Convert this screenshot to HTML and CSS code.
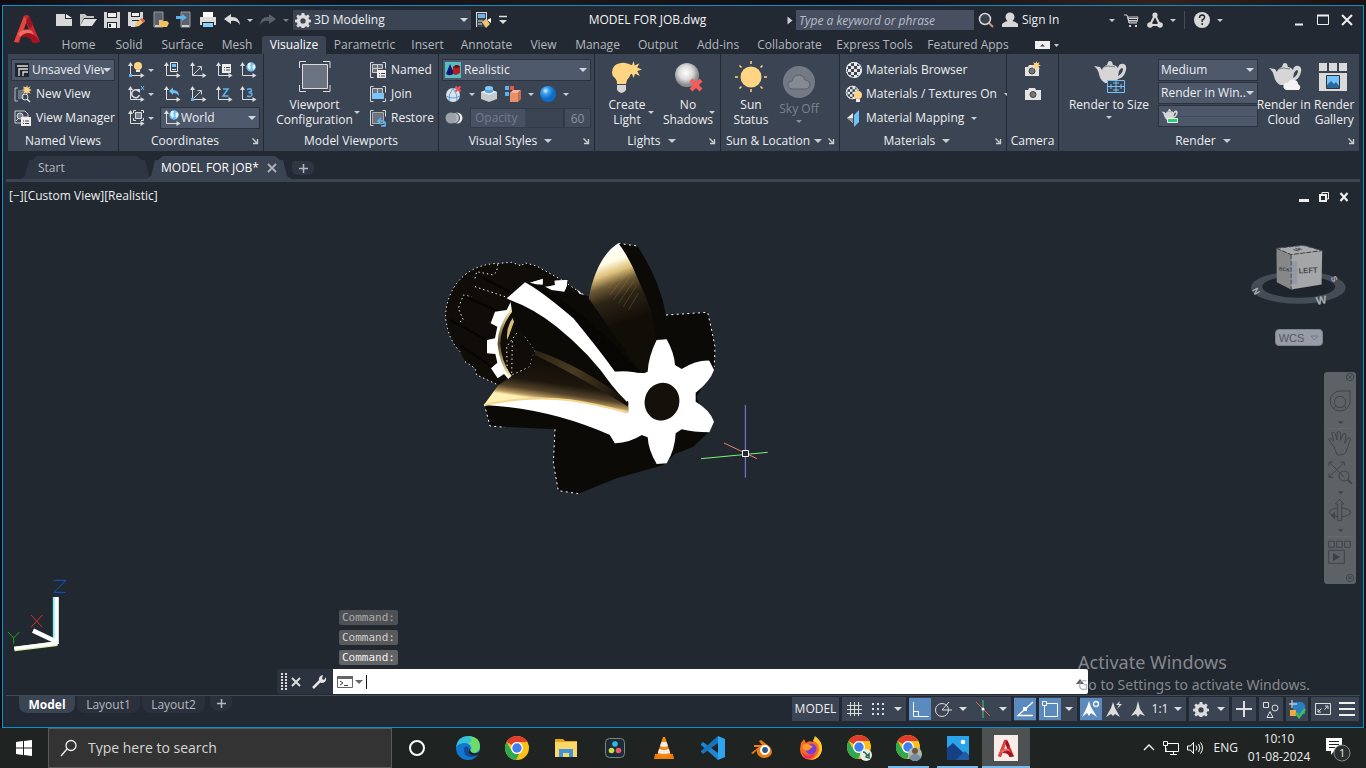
FILE: index.html
```html
<!DOCTYPE html>
<html lang="en">
<head>
<meta charset="utf-8">
<title>MODEL FOR JOB.dwg</title>
<link rel="stylesheet" href="styles.css">
</head>
<body>
<svg class="defs" aria-hidden="true">
  <defs>
    <symbol id="axes" viewBox="0 0 18 18"><path d="M3.500 3v11.500H15" fill="none" stroke="#dcdcdc"/><path d="M1 5L3.500 1 6 5zM13.500 12l4 2.500-4 2.500z" fill="#dcdcdc"/></symbol>
    <symbol id="globe" viewBox="0 0 10 10"><circle cx="5" cy="5" r="4.700" fill="#6fc1f5"/><path d="M2 1.500Q4 0 5 1.500L4 3.500 5 6 3.500 8 1.500 5zM6.500 3l2.500-.5.500 3L7.500 8 6.500 6z" fill="#e6f3fb"/></symbol>
    <symbol id="checker" viewBox="0 0 18 18"><circle cx="9" cy="9" r="8" fill="#e8e8e8"/><path d="M6 2h3v3H6zM12 2h2l1 3h-3zM3 5h3v3H3zM9 5h3v3H9zM15 5h1l1 3h-2zM6 8h3v3H6zM12 8h3v3h-3zM1 8h2v3H1zM3 11h3v3H3zM9 11h3v3H9zM6 14h3v3H6zM12 14h3l-3 2z" fill="#3b4453"/><circle cx="9" cy="9" r="7.500" fill="none" stroke="#e8e8e8"/></symbol>
    <symbol id="teapot" viewBox="0 0 34 24"><path d="M1 6l6 1 2 3q1-4 5-5l1-3q2-2 4 0l1 3q3 0 5 3 1-5 6-4 4 2 1 9-2 5-7 6-2 3-4 4H12q-5-3-6-9Q5 9 1 6zm25 5l-1 5q5-3 5-7-1-3-4 2z" fill="#d6d6d6" fill-rule="evenodd"/><path d="M10 7q5-2 12 0" stroke="#3b4453" stroke-width=".6" fill="none"/></symbol>
    <symbol id="gear" viewBox="0 0 16 16"><path d="M6.700 1h2.600l.4 2 1.500.7 1.800-1.200 1.700 1.700-1.200 1.800.6 1.400 1.900.4v2.400l-1.900.4-.6 1.400 1.200 1.800-1.700 1.700-1.800-1.200-1.500.7-.4 2H6.700l-.4-2-1.500-.7L3 15.500l-1.700-1.700L2.500 12l-.6-1.400L0 10.200V7.800l1.900-.4L2.500 6 1.300 4.200 3 2.500l1.800 1.200L6.300 3zM8 6.300A2.600 2.600 0 1 0 8 11.600 2.600 2.600 0 1 0 8 6.300z" fill="#dcdcdc" fill-rule="evenodd"/></symbol>
    <symbol id="burst" viewBox="0 0 16 16"><path d="M8 0l1.200 4.200L13.500 2l-2 4.200L16 8l-4.500 1.500L14 14l-4.500-2L8 16l-1.500-4L2 14l2-4.500L0 8l4.200-1.700L2 2l4.600 2z" fill="#ffd583"/></symbol>
    <symbol id="frame" viewBox="0 0 18 18"><path d="M4.500 1.500h-3v15h3M13.500 1.500h3v6M13.500 16.500h3v-3" fill="none" stroke="#d8d8d8"/></symbol>
    <symbol id="chrome" viewBox="0 0 24 24"><circle cx="12" cy="12" r="12" fill="#fbc116"/><path d="M12 0a12 12 0 0 1 10.400 6H12a6 6 0 0 0-5.200 3L1.600 6A12 12 0 0 1 12 0z" fill="#e33b2e"/><path d="M1.600 6l5.200 9a6 6 0 0 0 5.200 3h2l-3 6A12 12 0 0 1 1.600 6z" fill="#2da94f"/><circle cx="12" cy="12" r="6" fill="#fff"/><circle cx="12" cy="12" r="4.700" fill="#3f7ef0"/></symbol>
    <symbol id="autocad" viewBox="0 0 26 29"><path d="M0 28L10 2q2-2 5 0l11 26-7 1-3-7q-5-2-9 1l-2 6zM10 16h5l-3-8z" fill="#c9292f" fill-rule="evenodd"/><path d="M0 28L10 2l3 5-7 16-2 5z" fill="#e4453f"/><path d="M8 17q8-3 18 11l-7 1q-4-8-13-6z" fill="#a3131d"/><path d="M4 20q6-7 14-3l2 4q-7-5-14 2z" fill="#ef6b63"/><path d="M15 2l4 8-3 5-4-8z" fill="#981520"/></symbol>
    <symbol id="launcher" viewBox="0 0 8 8"><path d="M1.500 1.500l4 4M6.500 2v4.500H2" fill="none" stroke="#d0d0d0" stroke-width="1.300"/></symbol>
  </defs>
</svg>

<main class="window">
  <header class="top">
    <button class="logo" aria-label="Application menu"><svg width="26" height="29"><use href="#autocad"/></svg></button>
    <div class="title-row">
      <button class="tool" aria-label="New"><svg width="18" height="18" viewBox="0 0 18 18"><path d="M1 3h9v5h7v7H1z" fill="#d8d8d8"/><path d="M11 3l6 4h-6z" fill="#eee"/></svg></button>
      <button class="tool" aria-label="Open"><svg width="18" height="18" viewBox="0 0 18 18"><path d="M1 15V3h5l2 2h7v2H5z" fill="#c4c4c4"/><path d="M5 8h13l-5 7H1z" fill="#dedede"/></svg></button>
      <button class="tool" aria-label="Save"><svg width="18" height="18" viewBox="0 0 18 18"><path d="M1 1h16v16H1z" fill="#d8d8d8"/><path d="M4 1h10v6H4zM4 11h10v6H4z" fill="#222933"/><path d="M5 2h8v4H5zM5 12h8v5H5z" fill="#eee"/><path d="M6 13h2v3H6z" fill="#222933"/></svg></button>
      <button class="tool" aria-label="Save as"><svg width="18" height="18" viewBox="0 0 18 18"><path d="M1 1h15v8H5v6H1z" fill="#d8d8d8"/><path d="M4 1h9v5H4z" fill="#222933"/><path d="M5 2h7v3H5z" fill="#eee"/><path d="M4 10h7l-3 6H4z" fill="#ddd"/><path d="M8 16l1-4 6-5 3 3-6 5z" fill="#f3c56d"/><path d="M13 8.500L15 7l3 3-2 1.500z" fill="#e0604e"/></svg></button>
      <button class="tool" aria-label="Open from mobile"><svg width="18" height="18" viewBox="0 0 18 18"><path d="M3 1h9v15H3z" fill="#596170" stroke="#999"/><path d="M4 14h6v2H4z" fill="#ccc"/><path d="M8 16V9h3l1 1h4l2 2-2 4z" fill="#efbf60"/></svg></button>
      <button class="tool" aria-label="Save to mobile"><svg width="18" height="18" viewBox="0 0 18 18"><path d="M6 1h9v15H6z" fill="#596170" stroke="#999"/><path d="M7 14h7v2H7z" fill="#ccc"/><path d="M1 5h6V3l5 3.500L7 10V8H1z" fill="#5bb3ec"/></svg></button>
      <button class="tool" aria-label="Plot"><svg width="18" height="18" viewBox="0 0 18 18"><path d="M4 1h10v5H4z" fill="#fff"/><path d="M1 6h16v8H1z" fill="#dcdcdc"/><path d="M3 11h12v6H3z" fill="#222933"/><path d="M4 12h10v4H4z" fill="#8accfa"/></svg></button>
      <button class="tool" aria-label="Undo"><svg width="18" height="18" viewBox="0 0 18 18"><path d="M1 8l7-5v3q8-1 9 8-3-5-9-4v3z" fill="#dcdcdc"/></svg></button>
      <button class="drop" aria-label="Undo list"></button>
      <button class="tool" aria-label="Redo"><svg width="18" height="18" viewBox="0 0 18 18"><path d="M17 8l-7-5v3Q2 5 1 14q3-5 9-4v3z" fill="#59606b"/></svg></button>
      <button class="drop dim" aria-label="Redo list"></button>
      <div class="combo workspace"><svg width="16" height="16"><use href="#gear"/></svg><select aria-label="Workspace"><option>3D Modeling</option></select></div>
      <button class="tool" aria-label="Properties match"><svg width="18" height="18" viewBox="0 0 18 18"><path d="M2 1h11v15H2z" fill="#dcdcdc"/><path d="M3 2h9v14H3z" fill="#3a4350"/><path d="M4 3h7v4H4z" fill="#6fb5e8"/><path d="M4 10h5M4 13h4" stroke="#ddd"/><path d="M8 11l4-3 4 5-4 4z" fill="#f0c46a"/><path d="M13 9l4-2v5z" fill="#fff"/></svg></button>
      <button class="menu-tool" aria-label="Customize toolbar"><svg width="10" height="10" viewBox="0 0 10 10"><path d="M1 1.500h8" stroke="#ddd" stroke-width="1.500"/><path d="M1 5h8L5 9z" fill="#ddd"/></svg></button>
      <h1 class="doc-title">MODEL FOR JOB.dwg</h1>
      <button class="expand" aria-label="Expand search"></button>
      <input class="keyword" type="text" aria-label="Search" placeholder="Type a keyword or phrase">
      <button class="tool" aria-label="Find"><svg width="18" height="18" viewBox="0 0 18 18"><path d="M12 12l4 4" stroke="#c49a6b" stroke-width="2"/><circle cx="8" cy="8" r="5.500" fill="#39414c" stroke="#d8d8d8" stroke-width="1.500"/></svg></button>
      <button class="sign"><svg width="18" height="18" viewBox="0 0 18 18"><circle cx="9" cy="6" r="4.500" fill="#d8d8d8"/><path d="M1 16v-3q3-3 6-3h4q3 0 6 3v3z" fill="#d8d8d8"/></svg><span>Sign In</span><i class="tri"></i></button>
      <button class="tool" aria-label="App store"><svg width="18" height="18" viewBox="0 0 18 18"><path d="M2 4h3l2 8h8M6 6h10l-1 5H7zM7 7.500h8M7 9.500h8" fill="none" stroke="#d0d0d0"/><path d="M7 14h2v2H7zM13 14h2v2h-2z" fill="#d0d0d0"/></svg></button>
      <button class="tool" aria-label="Connect"><svg width="18" height="18" viewBox="0 0 18 18"><path d="M9 4L4 14h10z" fill="none" stroke="#d8d8d8" stroke-width="2"/><circle cx="9" cy="4" r="2.600" fill="#d8d8d8"/><circle cx="4" cy="14" r="2.800" fill="#d8d8d8"/><circle cx="14" cy="14" r="2.800" fill="#d8d8d8"/></svg></button>
      <button class="drop" aria-label="Connect list"></button>
      <span class="bar"></span>
      <button class="tool" aria-label="Help"><svg width="18" height="18" viewBox="0 0 18 18"><circle cx="9" cy="9" r="8" fill="#d8d8d8"/><path d="M6.500 7q0-3 2.700-3 2.600.2 2.300 2.600-.3 1.500-2.300 2.400v2" fill="none" stroke="#222933" stroke-width="1.500"/><circle cx="9.200" cy="13" r="1" fill="#222933"/></svg></button>
      <button class="drop" aria-label="Help list"></button>
      <div class="win-btns">
        <button class="tool" aria-label="Minimize"><svg width="14" height="14" viewBox="0 0 14 14"><path d="M3 11.500h8" stroke="#eee" stroke-width="2"/></svg></button>
        <button class="tool" aria-label="Maximize"><svg width="14" height="14" viewBox="0 0 14 14"><path d="M1.500 2.500h11v9h-11z" fill="none" stroke="#eee"/><path d="M1 2.500h12" stroke="#eee" stroke-width="2"/></svg></button>
        <button class="tool" aria-label="Close"><svg width="14" height="14" viewBox="0 0 14 14"><path d="M2 2l10 10M12 2L2 12" stroke="#eee" stroke-width="2"/></svg></button>
      </div>
    </div>
    <nav class="tabs">
      <button>Home</button><button>Solid</button><button>Surface</button><button>Mesh</button><button class="on">Visualize</button><button>Parametric</button><button>Insert</button><button>Annotate</button><button>View</button><button>Manage</button><button>Output</button><button>Add-ins</button><button>Collaborate</button><button>Express Tools</button><button>Featured Apps</button>
      <button class="ribbon-toggle" aria-label="Minimize ribbon"><svg width="26" height="10" viewBox="0 0 26 10"><path d="M0 1h15v8H0z" fill="#eee"/><path d="M5 6.500h5L7.500 4z" fill="#444"/><path d="M19 4h5l-2.500 3z" fill="#ccc"/></svg></button>
    </nav>
  </header>

  <section class="ribbon">
    <div class="panel">
      <div class="body pad">
        <div class="combo"><svg width="14" height="14" viewBox="0 0 14 14"><path d="M0 0h14v14H0z" fill="#22262c"/><path d="M2 3h11M4 13V6h9M8 13V9h5" fill="none" stroke="#e0e0e0" stroke-width="1.300"/></svg><select aria-label="View"><option>Unsaved View</option></select></div>
        <button class="row"><svg width="18" height="18" viewBox="0 0 18 18"><path d="M4 3H1v13h3M12 3H9" stroke="#bbb" fill="none"/><path d="M4 5h6v9H4z" fill="#6b7484"/><use href="#burst" x="8" width="10" height="10"/><circle cx="11" cy="12" r="3" fill="none" stroke="#ddd"/><path d="M13 14l3 3" stroke="#ddd" stroke-width="1.500"/></svg>New View</button>
        <button class="row"><svg width="18" height="18" viewBox="0 0 18 18"><path d="M1 2h10l3 3v3H9v6H1z" fill="none" stroke="#ccc"/><circle cx="6" cy="7" r="3" fill="#7a8392" stroke="#ddd"/><path d="M2 12l2-2" stroke="#ddd"/><path d="M7 8h10v9H7z" fill="#eee"/><path d="M9 12h1M11 12h4M9 14.500h1M11 14.500h4" stroke="#444"/></svg>View Manager</button>
      </div>
      <footer><span>Named Views</span></footer>
    </div>

    <div class="panel">
      <div class="body coords">
        <button class="ic" aria-label="UCS light"><svg width="18" height="18" viewBox="0 0 18 18"><use href="#axes"/><circle cx="11" cy="5" r="4" fill="#ffd583"/><path d="M9 9h4v2H9z" fill="#eee"/><path d="M2 13h3v3H2z" fill="#5bb3f5"/></svg></button><button class="drop" aria-label="UCS light list"></button>
        <button class="ic" aria-label="Named UCS"><svg width="18" height="18" viewBox="0 0 18 18"><use href="#axes"/><path d="M7.500 1.500h7v9h-7z" fill="#3b4453" stroke="#eee"/><path d="M9 3h4v3H9z" fill="#6fc1f5"/><path d="M9 8.500h4" stroke="#eee"/></svg></button>
        <button class="ic" aria-label="Z axis vector"><svg width="18" height="18" viewBox="0 0 18 18"><use href="#axes"/><path d="M4 14l8-8M8.500 5.500H12.500V9.500" fill="none" stroke="#ccc"/></svg></button>
        <button class="ic" aria-label="UCS settings"><svg width="18" height="18" viewBox="0 0 18 18"><use href="#axes"/><path d="M7 3h9v9H7z" fill="#eee"/><path d="M9 6.500h1M11 6.500h4M9 9h1M11 9h4" stroke="#444"/></svg></button>
        <button class="ic" aria-label="World"><svg width="18" height="18" viewBox="0 0 18 18"><use href="#axes"/><use href="#globe" x="7" y="1" width="10" height="10"/></svg></button>
        <button class="ic" aria-label="Rotate X"><svg width="18" height="18" viewBox="0 0 18 18"><use href="#axes"/><path d="M12 6.500a4 4 0 1 0 .5 3.500" fill="none" stroke="#ddd" stroke-width="1.500"/><path d="M9 4h4v4z" fill="#ddd"/><path d="M14 1l3 4M17 1l-3 4" stroke="#5bb3f5"/></svg></button><button class="drop" aria-label="Rotate list"></button>
        <button class="ic" aria-label="Previous"><svg width="18" height="18" viewBox="0 0 18 18"><use href="#axes"/><path d="M6 6l4-3.500V5q6 0 6 6-2-3-6-3v2z" fill="#6fc1f5"/></svg></button>
        <button class="ic" aria-label="Origin"><svg width="18" height="18" viewBox="0 0 18 18"><use href="#axes"/><path d="M4 14l8-8M8.500 5.500H12.500V9.500" fill="none" stroke="#ccc"/><path d="M2 13h3v3H2z" fill="#5bb3f5"/></svg></button>
        <button class="ic" aria-label="Z"><svg width="18" height="18" viewBox="0 0 18 18"><use href="#axes"/><path d="M8 4h5l-5 7h5.500" fill="none" stroke="#5bb3f5" stroke-width="1.500"/></svg></button>
        <button class="ic" aria-label="3 point"><svg width="18" height="18" viewBox="0 0 18 18"><use href="#axes"/><path d="M8 4.500q4-2 4.500 1 0 1.500-3 2 3.500.2 3.500 2-.5 3-5 1.500" fill="none" stroke="#5bb3f5" stroke-width="1.500"/></svg></button>
        <button class="ic" aria-label="View UCS"><svg width="18" height="18" viewBox="0 0 18 18"><use href="#axes"/><path d="M9 1.500H6.500V4M14 1.500h2.500V4M9 11.500H6.500V9M14 11.500h2.500V9" fill="none" stroke="#ddd"/><path d="M8.500 3.500h6v6h-6z" fill="#7a8392" stroke="#ddd"/></svg></button><button class="drop" aria-label="View UCS list"></button>
        <div class="combo world"><svg width="18" height="18" viewBox="0 0 18 18"><use href="#axes"/><use href="#globe" x="6" y="1" width="10" height="10"/></svg><select aria-label="Coordinate system"><option>World</option></select></div>
      </div>
      <footer><span>Coordinates</span><button aria-label="Coordinates settings"><svg width="8" height="8"><use href="#launcher"/></svg></button></footer>
    </div>

    <div class="panel">
      <div class="body split">
        <button class="big"><svg width="36" height="36" viewBox="0 0 36 36"><path d="M9 .5H2.500V7M26 .5h7V7M9 30.500H2.500V24M26 30.500h7V24" fill="none" stroke="#ddd"/><path d="M5.500 3.500h25v24h-25z" fill="#6b7280" stroke="#ddd"/></svg><span>Viewport<br>Configuration</span><i class="tri corner"></i></button>
        <div class="stack">
          <button class="row"><svg width="18" height="18" viewBox="0 0 18 18"><use href="#frame"/><path d="M3.500 3.500h5v4h-5zM8.500 3.500h5v4h-5zM3.500 7.500h5v4h-5z" fill="#6b7280" stroke="#ccc"/><path d="M8 9h9v8H8z" fill="#eee"/><path d="M10 12.500h1M12 12.500h4M10 15h1M12 15h4" stroke="#444"/></svg>Named</button>
          <button class="row"><svg width="18" height="18" viewBox="0 0 18 18"><use href="#frame"/><path d="M3.500 3.500h5v5h-5zM8.500 3.500h5v5h-5z" fill="#6b7280" stroke="#ccc"/><path d="M3 8h12v6H3z" fill="#7cc4f8"/></svg>Join</button>
          <button class="row"><svg width="18" height="18" viewBox="0 0 18 18"><use href="#frame"/><path d="M3.500 3.500h11v11h-11z" fill="#6b7280" stroke="#aaa"/><path d="M12 9l-3 3 3 3M9 12h5q3 1 2 5h-4" fill="none" stroke="#5bb3f5" stroke-width="1.500"/></svg>Restore</button>
        </div>
      </div>
      <footer><span>Model Viewports</span></footer>
    </div>

    <div class="panel">
      <div class="body pad">
        <div class="combo real"><svg width="16" height="16" viewBox="0 0 16 16"><path d="M0 0h16v16H0z" fill="#54bfc0"/><path d="M5 2l4 9q-3 4-8 1z" fill="#12186b"/><path d="M8 5l3-2 4 1v7l-4 2-3-1z" fill="#b01d22"/><path d="M8 5l3-2 4 1-3 2z" fill="#5b1014"/></svg><select aria-label="Visual style"><option>Realistic</option></select></div>
        <div class="tools">
          <button class="ic" aria-label="X-ray"><svg width="18" height="18" viewBox="0 0 18 18"><circle cx="8" cy="10" r="7" fill="#dbe3ea"/><path d="M8 3Q3 10 4 16M8 3q5 7 4 13M1 11q7 4 14 0" fill="none" stroke="#5a9fd8"/><path d="M10.500 1.500l5 5M15.500 1.500l-5 5" stroke="#f0504e" stroke-width="2"/></svg></button><button class="drop" aria-label="X-ray list"></button>
          <button class="ic" aria-label="Extrude"><svg width="18" height="18" viewBox="0 0 18 18"><path d="M1 7l8-3 8 3v7l-8 3-8-3z" fill="#c6c9ce"/><path d="M1 7l8 3 8-3-8-3z" fill="#eceef0"/><path d="M5 3v4q4 2.500 8 0V3z" fill="#56a9e0"/><ellipse cx="9" cy="3" rx="4" ry="2" fill="#85c9f7"/></svg></button>
          <button class="ic" aria-label="Face style"><svg width="18" height="18" viewBox="0 0 18 18"><path d="M1 1h4v4H1zM1 7h4v4H1z" fill="#5bb3f5"/><path d="M6 1h4v4H6z" fill="#e8563f"/><path d="M6 8l3-3h8l-3 3z" fill="#f3b397"/><path d="M6 8h8v9H6z" fill="#ea9068"/><path d="M14 8l3-3v9l-3 3z" fill="#c86e4a"/></svg></button><button class="drop" aria-label="Face style list"></button>
          <button class="ic" aria-label="Shading"><svg width="18" height="18" viewBox="0 0 18 18"><defs><radialGradient id="ball" cx=".35" cy=".3"><stop offset="0" stop-color="#e3f3ff"/><stop offset=".4" stop-color="#3ea1f2"/><stop offset="1" stop-color="#0d6cc4"/></radialGradient></defs><circle cx="9" cy="9" r="8" fill="url(#ball)"/></svg></button><button class="drop" aria-label="Shading list"></button>
        </div>
        <div class="opacity"><button class="ic" aria-label="Toggle opacity"><svg width="18" height="18" viewBox="0 0 18 18"><circle cx="12" cy="9" r="5.500" fill="#eee"/><circle cx="9" cy="9" r="5.500" fill="#b7bac0" stroke="#3b4453"/><circle cx="6" cy="9" r="5.500" fill="#9da1a9"/></svg></button><label for="opacity">Opacity</label><input id="opacity" type="text" value="60" disabled></div>
      </div>
      <footer><span>Visual Styles <i class="tri wide"></i></span><button aria-label="Visual Styles settings"><svg width="8" height="8"><use href="#launcher"/></svg></button></footer>
    </div>

    <div class="panel">
      <div class="body split even">
        <button class="big"><svg width="36" height="36" viewBox="0 0 36 36"><path d="M3 12q0-9 9-10 7-1 9 4l-2 3 3 3q-1 4-4 7l-1 4H8q0-4-2-6-3-2-3-5z" fill="#ffd583"/><use href="#burst" x="16" y="0" width="17" height="17"/><path d="M8 24h9v5q-2 3-4.500 3T8 29z" fill="#d5d5d5"/></svg><span>Create<br>Light</span><i class="tri corner"></i></button>
        <button class="big"><svg width="36" height="36" viewBox="0 0 36 36"><defs><radialGradient id="pearl" cx=".45" cy=".4"><stop offset="0" stop-color="#fff"/><stop offset=".6" stop-color="#d8d8d8"/><stop offset="1" stop-color="#8f8f8f"/></radialGradient></defs><circle cx="17" cy="14" r="12" fill="url(#pearl)"/><path d="M21 19l10 10M31 19L21 29" stroke="#f75c58" stroke-width="4"/></svg><span>No<br>Shadows</span><i class="tri corner"></i></button>
      </div>
      <footer><span>Lights <i class="tri wide"></i></span><button aria-label="Lights settings"><svg width="8" height="8"><use href="#launcher"/></svg></button></footer>
    </div>

    <div class="panel">
      <div class="body split sun">
        <button class="big"><svg width="36" height="36" viewBox="0 0 36 36"><circle cx="18" cy="16" r="10.500" fill="#ffd583"/><path d="M18 0v3M18 28v3M2 16h3M31 16h3M6.500 4.500l2 2M29.500 4.500l-2 2M6.500 27.500l2-2M29.500 27.500l-2-2" stroke="#ffd583" stroke-width="1.500"/></svg><span>Sun<br>Status</span></button>
        <button class="big off" disabled><svg width="36" height="40" viewBox="0 0 36 40"><circle cx="18" cy="21" r="16" fill="#747a85"/><path d="M11 28q-5-1-4-5 1-3 4-3 2-7 8-6 4 1 5 5 5 1 5 5-1 4-4 4z" fill="#858b95" stroke="#59606d"/></svg><span>Sky Off</span><i class="tri"></i></button>
      </div>
      <footer><span>Sun &amp; Location<i class="tri wide"></i></span><button aria-label="Sun settings"><svg width="8" height="8"><use href="#launcher"/></svg></button></footer>
    </div>

    <div class="panel">
      <div class="body pad materials">
        <button class="row"><svg width="18" height="18"><use href="#checker"/></svg>Materials Browser</button>
        <button class="row"><svg width="18" height="18" viewBox="0 0 18 18"><use href="#checker" width="15" height="15"/><circle cx="13" cy="10" r="4" fill="#ffd583"/><path d="M11 14h4v3h-4z" fill="#eee"/></svg>Materials / Textures On<i class="tri"></i></button>
        <button class="row"><svg width="18" height="18" viewBox="0 0 18 18"><path d="M2 9l6-5v10z" fill="#e8e8e8"/><path d="M2 9l6 5V9z" fill="#999"/><path d="M9 6l5-5v12l-5 5z" fill="#6fc1f5"/></svg>Material Mapping<i class="tri"></i></button>
      </div>
      <footer><span>Materials <i class="tri wide"></i></span><button aria-label="Materials settings"><svg width="8" height="8"><use href="#launcher"/></svg></button></footer>
    </div>

    <div class="panel">
      <div class="body camera">
        <button class="ic" aria-label="Create camera"><svg width="18" height="18" viewBox="0 0 18 18"><path d="M1 6h3l1-2h6l1 2h3v9H1z" fill="#e4e4e4"/><circle cx="8" cy="10" r="3" fill="#777" stroke="#444"/><use href="#burst" x="8" width="9" height="9"/></svg></button>
        <button class="ic" aria-label="Show cameras"><svg width="18" height="18" viewBox="0 0 18 18"><path d="M1 5h3l1-2h6l1 2h5v10H1z" fill="#e4e4e4"/><circle cx="9" cy="9.500" r="3" fill="#777" stroke="#444"/></svg></button>
      </div>
      <footer><span>Camera</span></footer>
    </div>

    <div class="panel">
      <div class="body split render">
        <button class="big"><svg width="36" height="36" viewBox="0 0 36 36"><use href="#teapot" x="2" y="-1" width="34" height="24"/><path d="M16.500 19.500h17v12h-17zM25 20v11M17 25.500h16M20 23v5M30 23v5M22 22h6M22 29h6" fill="#3b4453" stroke="#74c2f7"/></svg><span>Render to Size</span><i class="tri"></i></button>
        <div class="selects">
          <div class="combo"><select aria-label="Render quality"><option>Medium</option></select></div>
          <div class="combo"><select aria-label="Render target"><option>Render in Win...</option></select></div>
          <div class="progress"><svg width="18" height="16" viewBox="0 0 18 16"><use href="#teapot" width="17" height="13"/><path d="M6.500 10.500h10v4h-10z" fill="#2fd071" stroke="#eee"/></svg><span></span></div>
        </div>
        <button class="big"><svg width="36" height="36" viewBox="0 0 36 36"><use href="#teapot" x="2" y="1" width="34" height="24"/><path d="M20 29q-4-2-2-6 2-2 4-1 2-5 7-3 3 1 3 4 4 2 1 6z" fill="#f4f4f4"/></svg><span>Render in<br>Cloud</span></button>
        <button class="big"><svg width="36" height="36" viewBox="0 0 36 36"><path d="M3 2h8v8H3zM13 2h8v8h-8zM23 2h8v8h-8zM3 12h28v18H3z" fill="#dadada"/><path d="M10.500 14.500h13v13h-13z" fill="#74c2f7" stroke="#2d3440"/><path d="M11 24l4-4 3 3 2-2 3 4v2H11z" fill="#27699c"/></svg><span>Render<br>Gallery</span></button>
      </div>
      <footer><span>Render <i class="tri wide"></i></span><button aria-label="Render settings"><svg width="8" height="8"><use href="#launcher"/></svg></button></footer>
    </div>
  </section>

  <nav class="files">
    <button class="file start">Start</button>
    <button class="file on">MODEL FOR JOB* <svg width="10" height="10" viewBox="0 0 10 10"><path d="M1 1l8 8M9 1L1 9" stroke="#a8adb5" stroke-width="2"/></svg></button>
    <button class="file plus" aria-label="New drawing"><svg width="9" height="9" viewBox="0 0 9 9"><path d="M4.500 0v9M0 4.500h9" stroke="#b4b8bf" stroke-width="1.500"/></svg></button>
  </nav>

  <section class="viewport">
    <p class="view-label">[−][Custom View][Realistic]</p>
    <div class="doc-btns">
      <button aria-label="Minimize drawing"><svg width="12" height="12" viewBox="0 0 12 12"><path d="M1 8h10v3H1z" fill="#eee"/></svg></button>
      <button aria-label="Restore drawing"><svg width="12" height="12" viewBox="0 0 12 12"><path d="M4 3V1.500h6.500V8H9" fill="none" stroke="#eee"/><path d="M2 4h6v6H2z" fill="none" stroke="#eee" stroke-width="2"/></svg></button>
      <button aria-label="Close drawing"><svg width="12" height="12" viewBox="0 0 12 12"><path d="M2.500 2l7 8M9.500 2l-7 8" stroke="#eee" stroke-width="2.200"/></svg></button>
    </div>

    <svg class="model" viewBox="0 0 1050 825" aria-label="3D model">
      <defs>
        <linearGradient id="tip" x1="530" y1="50" x2="610" y2="270" gradientUnits="userSpaceOnUse"><stop offset="0" stop-color="#fff"/><stop offset=".2" stop-color="#fffbe4"/><stop offset=".34" stop-color="#dec17a"/><stop offset=".48" stop-color="#6f5a36"/><stop offset=".66" stop-color="#2c2416"/><stop offset="1" stop-color="#110d07"/></linearGradient>
        <linearGradient id="blade" x1="390" y1="395" x2="372" y2="515" gradientUnits="userSpaceOnUse"><stop offset="0" stop-color="#110d07"/><stop offset=".55" stop-color="#1d170d"/><stop offset=".78" stop-color="#54432a"/><stop offset=".92" stop-color="#b0925a"/><stop offset="1" stop-color="#fff0b5"/></linearGradient>
        <linearGradient id="edge" x1="315" y1="370" x2="590" y2="510" gradientUnits="userSpaceOnUse"><stop offset="0" stop-color="#2c2315"/><stop offset=".4" stop-color="#4a3b21"/><stop offset="1" stop-color="#120e07"/></linearGradient>
        <linearGradient id="ring" x1="0" y1="240" x2="0" y2="440" gradientUnits="userSpaceOnUse"><stop offset="0" stop-color="#f8e6aa"/><stop offset=".5" stop-color="#5b4724"/><stop offset="1" stop-color="#ffe9ad"/></linearGradient>
      </defs>
      <path d="M205 103L190 101Q120 108 80 160Q45 210 47 265Q55 330 90 365L105 395 135 415 135 430 205 465 240 440 400 400 475 205 395 150 320 108 283 98 275 108 245 97Z" fill="#100d08"/>
      <path d="M90 365Q55 330 47 265Q45 210 80 160Q120 108 190 101L245 97 275 108 283 98 320 108 395 150 470 200M105 395L135 415 140 435 205 465M135 145L140 125 190 135 200 125 203 103M90 275L100 270 85 235 100 195 125 200M135 170L240 205M260 310L230 350 232 435M285 320L315 360 300 410 245 435 247 330" fill="none" stroke="#fff" stroke-width="3" stroke-dasharray="4 9"/>
      <path d="M150 140L250 190M105 200L220 250M60 270L170 330M90 345L185 410" stroke="#060503" stroke-width="7"/>
      <path d="M245 210L230 240 195 245 182 280 202 290 195 325 171 330V370L196 372 202 398 183 415 203 445 222 432 235 447 243 438Q205 390 207 340Q210 280 247 235Z" fill="#fff"/>
      <path d="M247 238Q205 290 207 345Q212 400 242 440" fill="none" stroke="url(#ring)" stroke-width="8"/>
      <path d="M250 262Q227 290 232 330L252 275Z" fill="#d7bd7c"/>
      <path d="M300 158L338 147V164L318 163ZM345 170L375 166 374 152 412 150 410 168 403 185 365 180ZM440 178L470 203 450 195Z" fill="#fff"/>
      <path d="M565 40L622 48Q690 150 708 255L833 247 845 300 855 350 853 410 800 500 835 607 790 650 735 672 700 705 560 745 445 791 385 782 370 700 375 598 180 588 163 523 205 465 300 410 315 360 285 320 250 270 240 205 285 157 350 163 480 200 500 130 530 80Z" fill="#0c0a06"/>
      <path d="M300 158L338 147V164L318 163ZM345 170L375 166 374 152 412 150 410 168 403 185 365 180Z" fill="#fff"/>
      <path d="M565 40Q600 85 625 150Q670 240 680 330L653 425 635 433 476 205Q500 80 565 40Z" fill="url(#tip)"/>
      <path d="M580 120L535 175M590 130L540 195M600 140L550 210M610 155L565 220M618 170L580 230M625 190L595 240" stroke="#b8985c" stroke-opacity=".25" stroke-width="3"/>
      <path d="M290 158Q430 200 635 433L555 425Q430 240 290 158Z" fill="#070603"/>
      <path d="M315 360Q460 410 595 515V547Q400 500 163 523L205 465 300 410Z" fill="url(#blade)"/>
      <path d="M315 360Q460 410 595 515V530Q450 440 315 375Z" fill="url(#edge)"/>
      <path d="M163 525Q300 495 420 511Q500 522 590 548L635 615 555 640 540 615Q360 535 163 525Z" fill="#fff"/>
      <path d="M163 525Q300 495 420 511Q500 522 590 547" fill="none" stroke="#f4d88d" stroke-width="6"/>
      <path d="M285 157Q330 180 430 265Q500 350 555 425L650 430 590 515 545 465Q480 370 380 290Q310 235 240 210L230 205Z" fill="#fff"/>
      <path d="M565 40L622 48M708 255L833 247 845 300 855 350 853 410M375 598L370 700 385 782 445 791M163 523L180 588 225 592" fill="none" stroke="#fff" stroke-width="3" stroke-dasharray="6 10"/>
      <path d="M653 425Q655 380 680 330L710 328Q733 370 735 405L755 417Q800 390 838 392L852 420Q840 455 797 488V515Q840 540 852 575L838 607Q790 607 755 598L737 610Q735 660 710 700L680 702Q655 660 653 622L635 615Q600 638 555 640L540 615Q555 560 595 545V515Q560 490 545 460L555 425Q600 420 635 433Z" fill="#fff"/>
      <ellipse cx="696" cy="515" rx="52" ry="57" fill="#15110a" transform="rotate(15 696 515)"/>
      <path d="M946 525V743" stroke="#8583f2" stroke-width="3"/>
      <path d="M813 686L1013 667" stroke="#7df57a" stroke-width="3"/>
      <path d="M882 639L981 686" stroke="#f07a74" stroke-width="3"/>
      <path d="M937.500 661.500h18v18h-18z" fill="#222933" stroke="#fff" stroke-width="3"/>
    </svg>

    <svg class="cube" viewBox="0 0 300 190" aria-label="View cube">
      <ellipse cx="145" cy="134" rx="143" ry="49" fill="#444c56"/>
      <ellipse cx="146" cy="132" rx="110" ry="33" fill="#1e242c"/>
      <path d="M79 16L160 7 217 23 123 35Z" fill="#a9aaac"/>
      <path d="M79 16L123 35V140L80 118Z" fill="#858789"/>
      <path d="M123 35L217 23 215 125 123 140Z" fill="#a5a6a8"/>
      <path d="M118 55h24v68h-24z" fill="#8d96a3" opacity=".7"/>
      <path d="M79 16L123 35 217 23M123 35V140M79 16L160 7 217 23" fill="none" stroke="#40454c" stroke-width="3" stroke-dasharray="14 5"/>
      <text x="146" y="92" font-size="23" font-weight="700" fill="#44484e" transform="rotate(-3 146 92)">LEFT</text>
      <text x="86" y="82" font-size="15" font-weight="700" fill="#44484e" transform="rotate(8 86 82)">BCK</text>
      <path d="M130 20l16 4M136 16l14 5M145 16l10 4" stroke="#44484e" stroke-width="3"/>
      <text x="8" y="158" font-size="27" font-weight="700" fill="#aab0b6" transform="rotate(60 20 147)">N</text>
      <text x="198" y="184" font-size="34" font-weight="700" fill="#aab0b6" transform="rotate(-10 215 172)">W</text>
      <text x="246" y="118" font-size="25" font-weight="700" fill="#aab0b6" transform="rotate(65 255 108)">S</text>
    </svg>
    <button class="wcs">WCS<svg width="9" height="6" viewBox="0 0 9 6"><path d="M1 1h7L4.500 5z" fill="none" stroke="#777b86"/></svg></button>

    <div class="navbar" aria-label="Navigation bar">
      <svg viewBox="0 0 96 636">
        <g fill="none" stroke="#3f454c" stroke-width="3">
          <circle cx="78" cy="15" r="11"/><path d="M73 10l10 10M83 10L73 20"/>
          <path d="M48 57h30v34a30 30 0 1 1-30-34z"/><circle cx="48" cy="90" r="17"/><path d="M27 110l10-9M69 110l-10-9"/>
          <path d="M30 225L14 202q6-7 15 5l-6-24q7-6 11 3l5 18 1-24q7-4 10 3v22l8-20q8-2 8 5l-4 24 9-16q8-3 8 5L66 240q-10 12-27 8z"/>
          <path d="M15 270l46 46M61 270L15 316M15 282v-12h12M49 270h12v12M15 304v12h12"/><circle cx="60" cy="312" r="15"/><path d="M71 323l13 12" stroke-width="6"/>
          <ellipse cx="48" cy="421" rx="32" ry="13"/><path d="M41 446v-50h-7l13-14 13 14h-7v50z" fill="#5d6267"/><path d="M33 421l-10 10 10 10" fill="#3f454c"/>
          <path d="M14 508h17v18H14zM38 508h17v18H38zM62 508h17v18H62zM14 535h47v39H14z"/><circle cx="78" cy="618" r="11"/><path d="M72 615h12M73 620h10"/>
        </g>
        <path d="M42 148h16l-8 8zM42 358h16l-8 8zM42 472h16l-8 8zM27 543l21 12-21 12z" fill="#3b4148"/>
        <path d="M8 170h80M8 494h80" stroke="#6b7076" stroke-width="2"/>
      </svg>
    </div>

    <svg class="ucs" viewBox="0 0 210 240" aria-label="UCS icon">
      <path d="M152 84V225" stroke="#7df4f4" stroke-width="17"/><path d="M155 84V225" stroke="#fff" stroke-width="12"/>
      <path d="M157 224L28 240" stroke="#d8f5b0" stroke-width="14"/><path d="M157 222L28 238" stroke="#fff" stroke-width="10"/>
      <path d="M150 216L84 185" stroke="#fff" stroke-width="14"/>
      <g fill="none" stroke-width="3"><path d="M146 34h37l-36 36h34" stroke="#1456d4"/><path d="M78 138l34 37M112 138l-34 37" stroke="#d4302c"/><path d="M9 189l17 18 17-18M26 207v17" stroke="#18a818"/></g>
    </svg>

    <div class="history"><p>Command:</p><p>Command:</p><p>Command:</p></div>
    <div class="cmd">
      <div class="cmd-tools">
        <svg width="6" height="18" viewBox="0 0 6 18"><path d="M1 0v18M5 0v18" stroke="#ddd" stroke-width="2" stroke-dasharray="2 1"/></svg>
        <button aria-label="Close command line"><svg width="10" height="10" viewBox="0 0 10 10"><path d="M1 1l8 8M9 1L1 9" stroke="#ddd" stroke-width="2"/></svg></button>
        <button aria-label="Customize"><svg width="16" height="16" viewBox="0 0 16 16"><path d="M2 14L9 7" stroke="#e6e6e6" stroke-width="2.500"/><path d="M8 7q-1-5 4-6l-1 4 2 1 2-3q1 6-5 6z" fill="#e6e6e6"/></svg></button>
      </div>
      <div class="cmd-entry">
        <button aria-label="Recent commands"><svg width="26" height="14" viewBox="0 0 26 14"><path d="M.5 1.500h15v11H.5z" fill="#fff" stroke="#666"/><path d="M0 1h16v3H0z" fill="#666"/><path d="M3 6l3 2-3 2M7 10.500h4" fill="none" stroke="#444"/><path d="M18 5h8l-4 4z" fill="#666"/></svg></button>
        <input type="text" aria-label="Command line" autofocus>
        <button aria-label="Expand history"><svg width="8" height="5" viewBox="0 0 8 5"><path d="M0 5h8L4 0z" fill="#555"/></svg></button>
      </div>
    </div>
  </section>

  <footer class="status">
    <nav class="layouts"><button class="on">Model</button><button>Layout1</button><button>Layout2</button><button class="add" aria-label="Add layout"><svg width="9" height="9" viewBox="0 0 9 9"><path d="M4.500 0v9M0 4.500h9" stroke="#b4b8bf" stroke-width="1.500"/></svg></button></nav>
    <div class="toggles">
      <div class="grp"><button class="model-btn">MODEL</button></div>
      <div class="grp"><button class="t" aria-label="Grid"><svg width="18" height="18" viewBox="0 0 18 18"><path d="M5.500 2v14M9.500 2v14M13.500 2v14M2 5.500h15M2 9.500h15M2 13.500h15" stroke="#ddd"/></svg></button><button class="t" aria-label="Snap"><svg width="18" height="18" viewBox="0 0 18 18"><path d="M3 4h12M3 9h12M3 14h12" stroke="#ddd" stroke-width="2" stroke-dasharray="2 3"/></svg></button><button class="d" aria-label="Snap list"></button></div>
      <div class="grp"><button class="t on" aria-label="Ortho"><svg width="20" height="20" viewBox="0 0 20 20"><path d="M3.500 3v14.500H19M3.500 12.500h5v5" fill="none" stroke="#fff"/></svg></button><button class="t" aria-label="Polar"><svg width="18" height="18" viewBox="0 0 18 18"><circle cx="8" cy="10" r="6.500" fill="none" stroke="#ddd"/><path d="M8 10h10M8 10l7-8" stroke="#ddd"/></svg></button><button class="d" aria-label="Polar list"></button><button class="t" aria-label="Isodraft"><svg width="18" height="18" viewBox="0 0 18 18"><path d="M9 0v18" stroke="#3fd07a"/><path d="M2 2l14 14" stroke="#ee5a55"/><circle cx="9" cy="9" r="1.500" fill="#fff"/></svg></button><button class="d" aria-label="Isodraft list"></button></div>
      <div class="grp"><button class="t on" aria-label="Object snap tracking"><svg width="20" height="20" viewBox="0 0 20 20"><path d="M18 3L3 16.500h15" fill="none" stroke="#fff" stroke-width="1.300"/><path d="M8 8h4v4H8z" fill="#fff"/></svg></button></div>
      <div class="grp"><button class="t on" aria-label="Object snap"><svg width="20" height="20" viewBox="0 0 20 20"><path d="M4.500 4.500h13v13h-13z" fill="none" stroke="#fff"/><path d="M2.500 2.500h4v4h-4z" fill="#5b8abf" stroke="#fff"/></svg></button><button class="d" aria-label="Object snap list"></button></div>
      <div class="grp"><button class="t on" aria-label="Annotation visibility"><svg width="20" height="20" viewBox="0 0 20 20"><path d="M8 2l2 6 6 10-6-4-2 3-2-3-5 4 5-10z" fill="#fff"/><circle cx="15" cy="5" r="2.500" fill="none" stroke="#fff" stroke-width="1.300"/></svg></button><button class="t" aria-label="Auto scale"><svg width="18" height="18" viewBox="0 0 18 18"><path d="M8 2l2 6 5 9-5-3-2 2-2-2-5 3 5-9z" fill="#ddd"/><path d="M15 1l-4 4h3l-2 4 5-5h-3z" fill="#ddd"/></svg></button><button class="t" aria-label="Annotation scale"><svg width="18" height="18" viewBox="0 0 18 18"><path d="M9 1l2 8 5 7-5-2-2 3-2-3-5 2 5-7z" fill="#ddd"/></svg></button><button class="ratio">1:1</button><button class="d" aria-label="Scale list"></button></div>
      <div class="grp"><button class="t" aria-label="Settings"><svg width="16" height="16"><use href="#gear"/></svg></button><button class="d" aria-label="Settings list"></button></div>
      <div class="grp"><button class="t" aria-label="Add"><svg width="18" height="18" viewBox="0 0 18 18"><path d="M9 1v16M1 9h16" stroke="#ddd" stroke-width="2"/></svg></button></div>
      <div class="grp"><button class="t" aria-label="Isolate"><svg width="18" height="18" viewBox="0 0 18 18"><path d="M1.500 2.500h5v5h-5zM5 17.500h6l-3-6z" fill="none" stroke="#ddd"/><circle cx="13" cy="8" r="3" fill="none" stroke="#ddd"/></svg></button></div>
      <div class="grp"><button class="t slim" aria-label="Graphics"><svg width="20" height="20" viewBox="0 0 20 20"><path d="M6 3h9l3 3v9H6z" fill="#2b7fc0"/><path d="M5 1v8M2 5h8" stroke="#eee"/><path d="M3 11h6v6H3z" fill="#f2a93b"/><path d="M9 14l3 4 6-8" fill="none" stroke="#3fbf5a" stroke-width="2.500"/></svg></button></div>
      <div class="grp"><button class="t" aria-label="Clean screen"><svg width="18" height="18" viewBox="0 0 18 18"><path d="M1.500 3.500h15v11h-15zM4 9v3h3M4.500 11.500l3-3M14 9V6h-3M13.500 6.500l-3 3" fill="none" stroke="#ddd"/></svg></button><button class="t" aria-label="Customization"><svg width="18" height="18" viewBox="0 0 18 18"><path d="M1 3h16M1 9h16M1 15h16" stroke="#eee" stroke-width="2"/></svg></button></div>
    </div>
  </footer>
</main>

<aside class="watermark"><strong>Activate Windows</strong><span>Go to Settings to activate Windows.</span></aside>

<footer class="taskbar">
  <button class="win" aria-label="Start menu"><svg width="16" height="16" viewBox="0 0 16 16"><path d="M0 2l7-1v6.500H0zM8 1l8-1v7.500H8zM0 8.500h7V15l-7-1zM8 8.500h8V16l-8-1z" fill="#fff"/></svg></button>
  <label class="search"><svg width="18" height="18" viewBox="0 0 18 18"><circle cx="11" cy="6.500" r="5" fill="none" stroke="#eee" stroke-width="1.300"/><path d="M7 10l-6 7" stroke="#eee" stroke-width="1.300"/></svg><input type="text" placeholder="Type here to search" aria-label="Type here to search"></label>
  <button class="app cortana" aria-label="Cortana"><svg width="24" height="24" viewBox="0 0 24 24"><circle cx="12" cy="12" r="7" fill="none" stroke="#fff" stroke-width="2"/></svg></button>
  <button class="app" aria-label="Edge"><svg width="24" height="24" viewBox="0 0 24 24"><circle cx="12" cy="12" r="12" fill="#1278cf"/><path d="M0 11Q2 0 12 0q11 1 12 10 0 7-7 7-4-1-2-4Q15 8 9 7 3 7 0 11z" fill="#35c1d6"/><path d="M13 0q11 1 11 10 0 7-7 7-4-1-2-4 2-4-3-6 7-2 1-7z" fill="#6edb6a"/><path d="M8 12q-1 10 9 9 4-1 6-4-5 3-9 0-3-2-1-5-3-3-5 0z" fill="#124a97"/><path d="M14 12q-1 3 3 5 4 1 7-2l-1 3q-5 3-9 0-3-2 0-6z" fill="#202424"/></svg></button>
  <button class="app" aria-label="Chrome"><svg width="24" height="24"><use href="#chrome"/></svg></button>
  <button class="app" aria-label="File Explorer"><svg width="24" height="24" viewBox="0 0 24 24"><path d="M1 3h8l2 2h12v6H1z" fill="#e8a416"/><path d="M1 6h22v15H1z" fill="#fcd768"/><path d="M5 13h14v8h-4v-4H9v4H5z" fill="#3c96dc"/></svg></button>
  <button class="app" aria-label="DaVinci Resolve"><svg width="24" height="24" viewBox="0 0 24 24"><rect x="2.500" y="2.500" width="19" height="19" rx="4" fill="#1d2a3a" stroke="#7a8a7c"/><circle cx="12" cy="8" r="2.800" fill="#36b9e0"/><circle cx="8.500" cy="14.500" r="2.800" fill="#c6e04a"/><circle cx="15.500" cy="14.500" r="2.800" fill="#ef5965"/></svg></button>
  <button class="app" aria-label="VLC"><svg width="24" height="24" viewBox="0 0 24 24"><path d="M3 18h18l1 5H2z" fill="#ef7d0b"/><path d="M11 1h2l6 18q-7 3-14 0z" fill="#f5880f"/><path d="M9.500 6h5l1.500 4q-4 2-8 0zM7 13q5 2 10 0l1 4q-6 2-12 0z" fill="#eee"/></svg></button>
  <button class="app" aria-label="VS Code"><svg width="24" height="24" viewBox="0 0 24 24"><path d="M0 8l2-2 15 11v7L0 9z" fill="#2185cf"/><path d="M0 16l2 2L17 7V0L0 15z" fill="#1675bd"/><path d="M17 0l7 3v18l-7 3z" fill="#2ea5f2"/></svg></button>
  <button class="app" aria-label="Blender"><svg width="24" height="24" viewBox="0 0 24 24"><path d="M1 17l8-6H4V9h8L9 5l2-1 9 7q4 5 0 9-6 4-11 0-3-3-2-6l-4 4z" fill="#ed7f12"/><circle cx="15" cy="14" r="5" fill="#fff"/><circle cx="15" cy="14" r="2.900" fill="#265787"/></svg></button>
  <button class="app" aria-label="Firefox"><svg width="24" height="24" viewBox="0 0 24 24"><path d="M2 7l3-4 2 4q3-3 7-1l3-5q6 5 6 12-1 10-11 11Q1 23 1 13z" fill="#f96a25"/><path d="M16 0q8 6 7 14-2 9-11 10 8-4 8-11 0-6-6-8z" fill="#fcc62c"/><circle cx="12" cy="13" r="5.500" fill="#7b3fd0"/><path d="M3 10q4-4 8-1l3 2q-3 1-4 3-5 2-7-4z" fill="#fd9a2b"/><path d="M2 15q5 7 14 3-3 6-10 4z" fill="#ee2c62"/></svg></button>
  <button class="app" aria-label="Chrome profile one"><svg width="26" height="26" viewBox="0 0 26 26"><use href="#chrome" width="24" height="24"/><circle cx="19" cy="20" r="6" fill="#e8ecea"/><path d="M16 17q3 0 4 4M19 22l3-3v4z" fill="none" stroke="#226a42" stroke-width="1.500"/></svg></button>
  <button class="app open" aria-label="Chrome profile two"><svg width="26" height="26" viewBox="0 0 26 26"><use href="#chrome" width="24" height="24"/><circle cx="19" cy="19" r="7" fill="#a9bcab"/><circle cx="19" cy="16" r="3" fill="#76543f"/><path d="M13 23q2-4 6-4t6 4q-6 6-12 0z" fill="#7a8ca5"/></svg></button>
  <button class="app open" aria-label="Photos"><svg width="24" height="24" viewBox="0 0 24 24"><path d="M1 0h22v24H1z" fill="#2aa4e8"/><path d="M1 12l6-5 16 15v2H1z" fill="#173f84"/><path d="M10 24l9-9 4 4v5z" fill="#215ca8"/><circle cx="17" cy="6" r="2.300" fill="#fff"/></svg></button>
  <button class="app open current" aria-label="AutoCAD"><svg width="24" height="26" viewBox="0 0 24 26"><path d="M0 0h24v26H0z" fill="#f8ece8"/><use href="#autocad" x="4" y="4" width="16" height="18"/></svg></button>
  <div class="tray">
    <button aria-label="Hidden icons"><svg width="14" height="14" viewBox="0 0 14 14"><path d="M2 9l5-5 5 5" fill="none" stroke="#fff" stroke-width="1.300"/></svg></button>
    <button aria-label="Network"><svg width="18" height="16" viewBox="0 0 18 16"><path d="M6 3.500h10.500v8H4V8M8 14.500h7M11.500 12v2M1.500 1.500h4v4h-4zM3.500 6v6" fill="none" stroke="#fff"/></svg></button>
    <button aria-label="Volume"><svg width="18" height="16" viewBox="0 0 18 16"><path d="M1.500 6h3l3-3.500v11L4.500 10h-3zM10 5.500q2 2.500 0 5M12.500 4q3 4 0 8M14.500 2.500q4 5.500 0 11" fill="none" stroke="#fff"/></svg></button>
    <button class="lang">ENG</button>
    <button class="clock"><time>10:10</time><time>01-08-2024</time></button>
    <button class="notes" aria-label="Notifications"><svg width="26" height="28" viewBox="0 0 26 28"><path d="M1 4h16v13h-8l-3 4v-4H1z" fill="#fff"/><path d="M4 7.500h10M4 10.500h10M4 13.500h6" stroke="#222"/><circle cx="17" cy="19" r="8" fill="#2b2f2f" stroke="#888"/></svg><b>1</b></button>
  </div>
</footer>
</body>
</html>
```

FILE: styles.css
```css
* { box-sizing: border-box; }
html, body { height: 100%; margin: 0; }
body {
  display: flex;
  flex-direction: column;
  background: linear-gradient(90deg, #0d0c12, #2a1c1d 12%, #141114 25%, #201719 40%, #0f0e12 60%, #34221f 85%, #1c1210);
  color: #eceef0;
  font: 12px/16px "Open Sans", "Noto Sans", sans-serif;
  overflow: hidden;
}
button, input, select { font: inherit; color: inherit; border: 0; padding: 0; margin: 0; background: none; border-radius: 0; }
button { display: inline-flex; align-items: center; justify-content: center; white-space: nowrap; flex: none; }
svg { display: block; flex: none; }
p, h1 { margin: 0; }
.defs { position: absolute; width: 0; height: 0; }

.window {
  flex: 1;
  min-height: 0;
  margin: 5px 2px 0;
  padding: 0 3px;
  border: 1px solid #0a8fd0;
  background: #222933;
  display: flex;
  flex-direction: column;
}

/* title bar and ribbon tabs */
.top { display: grid; grid-template-columns: 46px minmax(0, 1fr); grid-template-rows: 28px 20px; }
.logo { grid-row: 1 / 3; align-items: flex-start; justify-content: flex-start; padding: 8px 0 0 8px; }
.title-row { display: flex; align-items: center; }
.tool { width: 24px; height: 24px; }
.drop { width: 12px; height: 24px; }
.drop::after, .tri, .expand::after {
  content: "";
  display: inline-block;
  flex: none;
  border: 3px solid transparent;
  border-top-color: #c9ccd1;
  border-bottom: 0;
}
.drop.dim::after { border-top-color: #7a808a; }
.tri.wide { border-width: 4px 4px 0; margin-left: 4px; vertical-align: 2px; }
.combo {
  position: relative;
  height: 22px;
  display: flex;
  align-items: center;
  gap: 3px;
  padding-left: 3px;
  background: #4d586b;
  border: 1px solid #2b323d;
}
.combo select { appearance: none; flex: 1; min-width: 0; height: 20px; padding-right: 10px; overflow: hidden; }
.combo::after {
  content: "";
  position: absolute;
  right: 3px;
  top: 8px;
  border: 4px solid transparent;
  border-top-color: #d4d6da;
  border-bottom: 0;
  pointer-events: none;
}
.workspace { width: 178px; height: 20px; margin-left: 1px; background: #3b4453; border: 0; padding-left: 2px; }
.menu-tool { width: 16px; height: 24px; }
.doc-title { flex: 1; min-width: 0; text-align: center; font-size: 12px; font-weight: 400; color: #f2f2f2; }
.expand { width: 12px; height: 24px; }
.expand::after { transform: rotate(-90deg); border-width: 5px 4px 0; }
.keyword { width: 178px; height: 20px; padding: 0 3px; background: #474f61; font-style: italic; }
.keyword::placeholder { color: #b9bdc6; opacity: 1; }
.sign { width: 121px; gap: 3px; justify-content: flex-start; padding: 0 4px 0 3px; height: 24px; }
.sign .tri { margin-left: auto; }
.bar { width: 1px; height: 18px; background: #454c58; margin: 0 5px; }
.win-btns { display: flex; margin-left: 61px; margin-right: 1px; }

.tabs {
  display: grid;
  grid-template-columns: 53fr 48fr 59fr 50fr 64fr 77fr 49fr 69fr 45fr 63fr 58fr 62fr 81fr 89fr 98fr 343fr;
  padding-top: 2px;
}
.tabs button { color: #b4b8be; min-width: 0; }
.tabs .on { background: #3b4453; color: #fff; border-radius: 3px 3px 0 0; }
.tabs .ribbon-toggle { justify-content: flex-start; padding-left: 18px; }

/* ribbon */
.ribbon {
  display: grid;
  grid-template-columns: 110fr 144fr 174fr 155fr 125fr 118fr 166fr 51fr 300fr;
  gap: 1px;
  margin: 0 1px 0 2px;
}
.panel { min-width: 0; background: #3b4453; display: flex; flex-direction: column; }
.body { height: 77px; padding-top: 4px; }
.panel footer { height: 20px; display: flex; align-items: center; }
.panel footer span { flex: 1; text-align: center; white-space: nowrap; }
.panel footer button { width: 12px; height: 16px; justify-content: flex-start; }
.pad { padding-left: 3px; padding-right: 3px; }
.pad > .combo { margin: 1px 0; }
.row { display: flex; height: 24px; justify-content: flex-start; gap: 4px; padding-left: 3px; }
.row .tri { margin-left: 4px; }
.ic { width: 24px; height: 24px; }
.coords { display: grid; grid-template-columns: 24px 12px 26px 26px 24px 24px; grid-auto-rows: 24px; padding-left: 5px; }
.coords .drop { justify-content: flex-start; }
.world { grid-column: 3 / 7; margin: 1px 0; padding-left: 2px; gap: 0; }
.split { display: flex; }
.big { position: relative; height: 72px; padding-top: 3px; display: flex; flex-direction: column; justify-content: flex-start; line-height: 15px; flex: 1 1 0; min-width: 0; }
.big > .tri { margin-top: 4px; }
.big > .tri.corner { position: absolute; right: 2px; bottom: 16px; }
.body.split > .big:first-child { margin-left: 3px; }
.split > .stack { margin-left: 4px; width: 72px; }
.even .big { margin-right: 3px; }
.real { padding-left: 2px; }
.tools, .opacity { display: flex; height: 24px; align-items: center; }
.tools { padding-right: 4px; }
.tools .ic { width: 24px; }
.tools .drop { width: 11px; }
.opacity { height: 22px; margin-top: 1px; }
.opacity label { flex: 1; height: 20px; line-height: 18px; margin-left: 4px; padding-left: 4px; color: #747c8a; background: linear-gradient(90deg, #475164 59%, #3b4453 59%); border: 1px solid #323a47; }
.opacity input { width: 27px; height: 20px; text-align: center; color: #8b929e; background: #434c5c; border: 1px solid #323a47; }
.body.sun > .big:first-child { flex: 0 0 54px; }
.body.sun > .off { flex: 0 0 42px; color: #7b828e; }
.off .tri { border-top-color: #8b919b; }
.materials .row { gap: 3px; padding-left: 2px; }
.camera { display: flex; flex-direction: column; align-items: center; }
.render { gap: 1px; }
.render .big:first-child { flex: 0 0 94px; }
.selects { width: 100px; display: flex; flex-direction: column; gap: 1px; padding-top: 1px; margin-left: 1px; }
.selects .combo { padding-left: 2px; }
.progress { height: 22px; display: flex; align-items: center; background: #4a5466; border: 1px solid #2b323d; padding-left: 2px; gap: 1px; }
.progress span { flex: 1; height: 20px; background: linear-gradient(#4d586b 50%, #3f495a 50%, #3f495a 55%, #4d586b 55%); }

/* drawing file tabs */
.files { height: 31px; padding: 5px 0 0 14px; display: flex; align-items: stretch; border-bottom: 3px solid #3b4453; }
.file { height: 23px; color: #b4b8be; background: #2f3643; }
.file.start, .file.on {
  clip-path: polygon(0 100%, 5px 88%, 9px 18%, 12px 4px, 17px 0, calc(100% - 17px) 0, calc(100% - 12px) 4px, calc(100% - 9px) 18%, calc(100% - 5px) 88%, 100% 100%);
}
.file.start { width: 134px; justify-content: flex-start; padding-left: 18px; }
.file.on { width: 146px; margin-left: -8px; gap: 8px; background: #3b4453; color: #fff; }
.file.plus { width: 22px; height: 14px; margin: 5px 0 0 0; border-radius: 3px 6px 6px 6px; }

/* drawing area */
.viewport { flex: 1; min-height: 0; position: relative; background: #222830; }
.view-label { padding: 6px 3px; }
.doc-btns { position: absolute; right: 8px; top: 7px; display: flex; gap: 4px; }
.doc-btns button { width: 16px; height: 16px; }
.model { position: absolute; left: 424px; top: 48px; width: 350px; height: 275px; }
.cube { position: absolute; right: 10px; top: 61px; width: 100px; height: 63px; font-family: "Liberation Sans", sans-serif; overflow: visible; }
.wcs { position: absolute; right: 37px; top: 147px; width: 48px; height: 17px; gap: 6px; background: #989ba8; color: #55595f; border: 1px solid #7f828d; border-radius: 4px; font: 11px/14px "Liberation Sans", sans-serif; }
.navbar { position: absolute; right: 4px; top: 190px; width: 32px; height: 212px; background: #5d6267; border-radius: 3px; }
.navbar svg { width: 32px; height: 212px; }
.ucs { position: absolute; left: -1px; bottom: 46px; width: 70px; height: 80px; overflow: visible; }
.history { position: absolute; left: 333px; bottom: 30px; display: flex; flex-direction: column; gap: 5px; align-items: flex-start; font: 11px/15px "DejaVu Sans Mono", monospace; }
.history p { padding: 0 3px; background: #626364; border-radius: 2px; color: #f0f0f0; }
.history p:nth-child(1) { background: #4e5154; color: #a9abad; }
.history p:nth-child(2) { background: #58595b; color: #cfd0d1; }
.cmd { position: absolute; left: 271px; right: 272px; bottom: 1px; height: 25px; display: flex; }
.cmd-tools { width: 56px; display: flex; align-items: center; justify-content: space-between; padding: 0 6px 0 4px; background: #2c323e; border-radius: 3px 0 0 3px; }
.cmd-tools button:first-of-type { margin-right: 6px; }
.cmd-entry { flex: 1; display: flex; align-items: center; background: #fff; color: #111; padding: 0 4px; gap: 3px; border-radius: 0 2px 2px 0; }
.cmd-entry input { flex: 1; min-width: 0; height: 14px; border-left: 1px solid #111; outline: 0; caret-color: transparent; }

/* layouts and drafting toggles */
.status { height: 32px; display: flex; justify-content: space-between; border-top: 1px solid #444a54; padding-right: 1px; }
.layouts { display: flex; padding-left: 13px; }
.layouts button { height: 17px; width: 63px; color: #b4b8be; background: #2b313c; border-radius: 0 0 8px 8px; margin-right: 2px; }
.layouts .on { width: 56px; background: #3b4453; color: #fff; font-weight: 700; }
.layouts .add { width: 22px; height: 15px; margin-left: 3px; }
.toggles { display: flex; gap: 3px; padding-top: 1px; }
.grp { display: flex; height: 24px; align-items: center; background: #3b4453; }
.t { width: 24px; height: 22px; }
.t.on, .t.slim { width: 22px; }
.t.on { background: #5b8abf; }
.d { width: 16px; height: 22px; }
.d::after { content: ""; border: 4px solid transparent; border-top-color: #ddd; border-bottom: 0; }
.model-btn { width: 47px; height: 24px; }
.ratio { width: 20px; }

.watermark { position: absolute; right: 56px; bottom: 73px; display: flex; flex-direction: column; color: rgba(160, 163, 167, .8); font: 14px/20px "Noto Sans", sans-serif; pointer-events: none; }
.watermark strong { font-size: 18px; line-height: 26px; font-weight: 400; }

/* taskbar */
.taskbar { height: 40px; flex: none; display: flex; background: #1f2423; }
.win { width: 48px; }
.search { width: 344px; display: flex; align-items: center; gap: 10px; padding-left: 11px; background: #333; border: 1px solid #5a5a5a; }
.search input { flex: 1; min-width: 0; font-size: 14px; outline: 0; }
.search input::placeholder { color: #d6d6d6; opacity: 1; }
.app { width: 41px; margin: 0 4px; height: 40px; border-bottom: 2px solid transparent; border-top: 2px solid transparent; }
.app.cortana { margin: 0 6px 0 4px; }
.app.open { border-bottom-color: #76b9ed; }
.app.current { width: 48px; margin: 0; background: #4d5151; border-top-color: #4d5151; }
.tray { margin-left: auto; display: flex; align-items: center; gap: 6px; }
.lang { margin-left: 4px; }
.clock { flex-direction: column; width: 70px; line-height: 18px; }
.notes { position: relative; width: 46px; height: 40px; padding-right: 10px; }
.notes b { position: absolute; left: 19px; top: 17px; font-size: 11px; line-height: 16px; font-weight: 400; }
```
